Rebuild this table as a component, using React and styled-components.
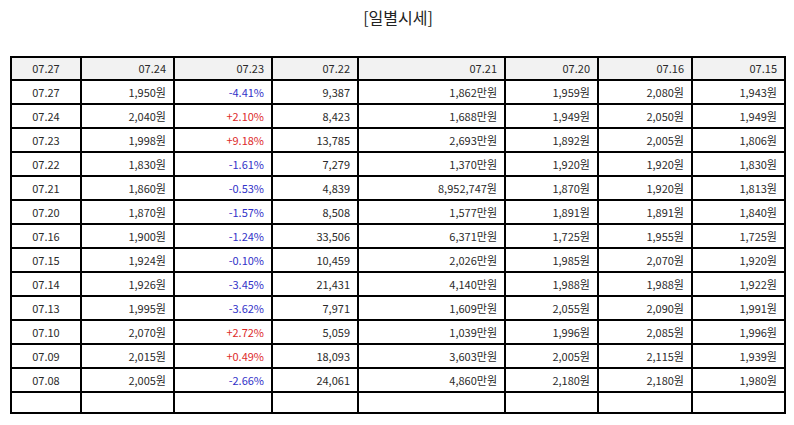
import React from "react";
import styled, { createGlobalStyle } from "styled-components";

const Global = createGlobalStyle`
  html, body { margin: 0; padding: 0; background: #fff; }
  body { font-family: "Noto Sans CJK KR", "Noto Sans", sans-serif; color: #2a2a2a; }
`;

const Page = styled.div`
  padding: 5px 8px 0 10px;
  width: 776px;
`;

const Title = styled.h3`
  margin: 0;
  height: 24px;
  line-height: 24px;
  text-align: center;
  font-size: 16px;
  font-weight: normal;
  color: #222;
`;

const Table = styled.table`
  margin-top: 27px;
  width: 776px;
  border-collapse: separate;
  border-spacing: 0;
  border: 1px solid #000;
  table-layout: fixed;
  font-size: 11px;
`;

const Cell = styled.td`
  border: 1px solid #000;
  height: ${(p) => p.$h || 22}px;
  padding: 0 7px 0 0;
  line-height: ${(p) => p.$h || 22}px;
  text-align: ${(p) => (p.$center ? "center" : "right")};
  padding-left: ${(p) => (p.$center ? "7px" : "0")};
  color: ${(p) => (p.$tone === "up" ? "#dd2b2b" : p.$tone === "down" ? "#3232c8" : "#2a2a2a")};
  white-space: nowrap;
`;

const HeadCell = styled(Cell).attrs({ as: "th" })`
  background: #f2f2f2;
  font-weight: normal;
`;

const widths = [70, 93, 98, 86, 147, 93, 94, 93];
const headers = ["07.27", "07.24", "07.23", "07.22", "07.21", "07.20", "07.16", "07.15"];

const rows = [
  ["07.27", "1,950원", "-4.41%", "9,387", "1,862만원", "1,959원", "2,080원", "1,943원"],
  ["07.24", "2,040원", "+2.10%", "8,423", "1,688만원", "1,949원", "2,050원", "1,949원"],
  ["07.23", "1,998원", "+9.18%", "13,785", "2,693만원", "1,892원", "2,005원", "1,806원"],
  ["07.22", "1,830원", "-1.61%", "7,279", "1,370만원", "1,920원", "1,920원", "1,830원"],
  ["07.21", "1,860원", "-0.53%", "4,839", "8,952,747원", "1,870원", "1,920원", "1,813원"],
  ["07.20", "1,870원", "-1.57%", "8,508", "1,577만원", "1,891원", "1,891원", "1,840원"],
  ["07.16", "1,900원", "-1.24%", "33,506", "6,371만원", "1,725원", "1,955원", "1,725원"],
  ["07.15", "1,924원", "-0.10%", "10,459", "2,026만원", "1,985원", "2,070원", "1,920원"],
  ["07.14", "1,926원", "-3.45%", "21,431", "4,140만원", "1,988원", "1,988원", "1,922원"],
  ["07.13", "1,995원", "-3.62%", "7,971", "1,609만원", "2,055원", "2,090원", "1,991원"],
  ["07.10", "2,070원", "+2.72%", "5,059", "1,039만원", "1,996원", "2,085원", "1,996원"],
  ["07.09", "2,015원", "+0.49%", "18,093", "3,603만원", "2,005원", "2,115원", "1,939원"],
  ["07.08", "2,005원", "-2.66%", "24,061", "4,860만원", "2,180원", "2,180원", "1,980원"],
  ["", "", "", "", "", "", "", ""],
];

const tone = (v) => (v.startsWith("+") ? "up" : v.startsWith("-") ? "down" : undefined);

export default function App() {
  return (
    <>
      <Global />
      <Page>
        <Title>[일별시세]</Title>
        <Table>
          <colgroup>
            {widths.map((w, i) => (
              <col key={i} style={{ width: w }} />
            ))}
          </colgroup>
          <thead>
            <tr>
              {headers.map((h, i) => (
                <HeadCell key={i} $center={i === 0} $h={21}>
                  {h}
                </HeadCell>
              ))}
            </tr>
          </thead>
          <tbody>
            {rows.map((r, ri) => {
              const empty = r.every((v) => v === "");
              return (
                <tr key={ri}>
                  {r.map((v, i) => (
                    <Cell
                      key={i}
                      $center={i === 0}
                      $h={empty ? 19 : 22}
                      $tone={i === 2 ? tone(v) : undefined}
                    >
                      {v}
                    </Cell>
                  ))}
                </tr>
              );
            })}
          </tbody>
        </Table>
      </Page>
    </>
  );
}
